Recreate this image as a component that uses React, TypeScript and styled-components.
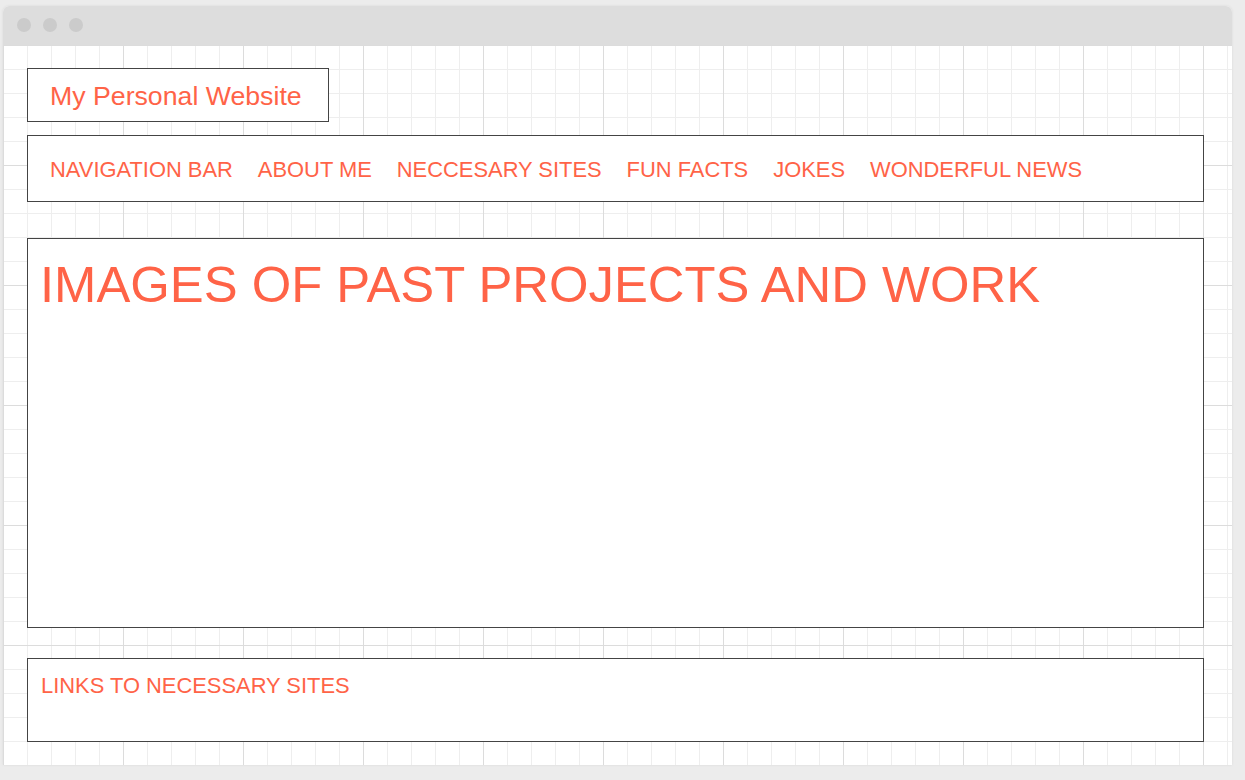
import React from "react";
import styled, { createGlobalStyle } from "styled-components";

const Global = createGlobalStyle`
  html, body { margin: 0; padding: 0; background: #ececec; }
  body { font-family: "Liberation Sans", Arial, sans-serif; }
`;

const Page = styled.div`
  padding: 6px 13px 15px 3px;
  box-sizing: border-box;
  width: 1245px;
  height: 780px;
`;

const Window = styled.div`
  width: 1229px;
  height: 759px;
  display: flex;
  flex-direction: column;
  border-radius: 6px 6px 0 0;
  box-shadow: 0 0 3px rgba(0, 0, 0, 0.08);
  overflow: hidden;
  background: #fff;
`;

const TitleBar = styled.div`
  height: 39px;
  flex: none;
  background: #dddddd;
  display: flex;
  align-items: center;
  gap: 12px;
  padding: 0 0 2px 14px;
  box-sizing: border-box;
`;

const Dot = styled.span`
  width: 14px;
  height: 14px;
  border-radius: 50%;
  background: #cbcbcb;
`;

const Canvas = styled.div`
  flex: 1;
  display: flex;
  flex-direction: column;
  align-items: flex-start;
  padding: 23px 28px 0 24px;
  background-color: #fff;
  background-image:
    linear-gradient(to right, #dcdcdc 1px, transparent 1px),
    linear-gradient(to bottom, #dcdcdc 1px, transparent 1px),
    linear-gradient(to right, #eeeeee 1px, transparent 1px),
    linear-gradient(to bottom, #eeeeee 1px, transparent 1px);
  background-size: 120px 120px, 120px 120px, 24px 24px, 24px 24px;
  background-position: 0 0, 0 0, 0 0, 0 0;
  color: #ff6347;
`;

const Box = styled.div<{ $h: number; $mt: number }>`
  box-sizing: border-box;
  align-self: stretch;
  border: 1px solid #444;
  background: #fff;
  height: ${(p) => p.$h}px;
  margin-top: ${(p) => p.$mt}px;
`;

const SiteTitle = styled.div`
  box-sizing: border-box;
  width: 302px;
  height: 54px;
  border: 1px solid #444;
  background: #fff;
  padding: 3px 0 0 22px;
  display: flex;
  align-items: center;
  font-size: 26.7px;
`;

const Nav = styled(Box)`
  display: flex;
  align-items: center;
  gap: 25px;
  padding: 2px 0 0 22px;
`;

const NavItem = styled.span`
  font-size: 21.9px;
  text-transform: uppercase;
  white-space: nowrap;
`;

const Heading = styled.h1`
  margin: 0;
  padding: 21px 0 0 12px;
  font-size: 50.8px;
  font-weight: 400;
  line-height: 1;
  white-space: nowrap;
`;

const FooterText = styled.div`
  padding: 16px 0 0 13px;
  font-size: 21.9px;
  line-height: 1;
`;

const navItems = [
  "Navigation Bar",
  "About Me",
  "Neccesary Sites",
  "Fun Facts",
  "Jokes",
  "Wonderful News",
];

export default function App() {
  return (
    <>
      <Global />
      <Page>
        <Window>
          <TitleBar>
            <Dot />
            <Dot />
            <Dot />
          </TitleBar>
          <Canvas>
            <SiteTitle>My Personal Website</SiteTitle>
            <Nav $h={67} $mt={13}>
              {navItems.map((n) => (
                <NavItem key={n}>{n}</NavItem>
              ))}
            </Nav>
            <Box $h={390} $mt={36}>
              <Heading>IMAGES OF PAST PROJECTS AND WORK</Heading>
            </Box>
            <Box $h={84} $mt={30}>
              <FooterText>LINKS TO NECESSARY SITES</FooterText>
            </Box>
          </Canvas>
        </Window>
      </Page>
    </>
  );
}
